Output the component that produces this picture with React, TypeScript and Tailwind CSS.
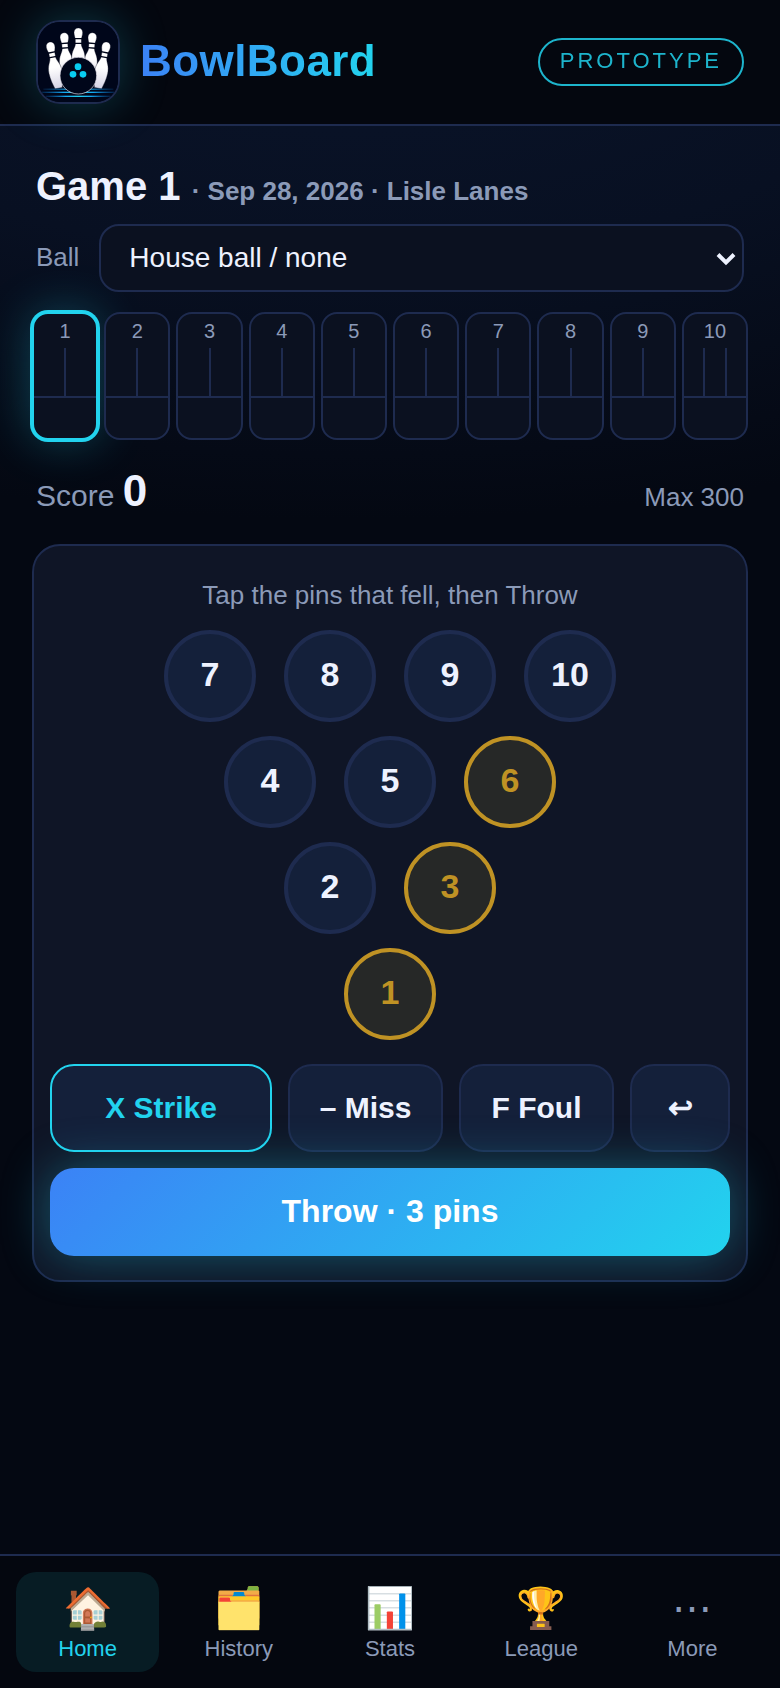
import { useState } from "react";

type Tab = { icon: string; label: string };

const TABS: Tab[] = [
  { icon: "🏠", label: "Home" },
  { icon: "🗂️", label: "History" },
  { icon: "📊", label: "Stats" },
  { icon: "🏆", label: "League" },
  { icon: "⋯", label: "More" },
];

const PIN_ROWS = [[7, 8, 9, 10], [4, 5, 6], [2, 3], [1]];

const FRAMES = [1, 2, 3, 4, 5, 6, 7, 8, 9, 10];

const PIN_TRANSFORMS = [
  "translate(78 32) rotate(-4)",
  "translate(164 32) rotate(4)",
  "translate(121 18)",
  "translate(35 60) rotate(-11)",
  "translate(207 60) rotate(11)",
];

function Logo() {
  return (
    <svg viewBox="0 0 240 240" className="block size-full" aria-hidden="true">
      <defs>
        <linearGradient id="pinBody" x1="0" y1="0" x2="0" y2="1">
          <stop offset="0.55" stopColor="#ffffff" />
          <stop offset="1" stopColor="#d5d3e4" />
        </linearGradient>
        <linearGradient id="laneLine" x1="0" y1="0" x2="1" y2="0">
          <stop offset="0" stopColor="#0a6fc4" stopOpacity="0.2" />
          <stop offset="0.3" stopColor="#12a5ee" />
          <stop offset="0.5" stopColor="#22d3ee" />
          <stop offset="0.7" stopColor="#12a5ee" />
          <stop offset="1" stopColor="#0a6fc4" stopOpacity="0.2" />
        </linearGradient>
      </defs>
      <rect width="240" height="240" fill="#00061a" />
      {PIN_TRANSFORMS.map((transform) => (
        <g key={transform} transform={transform}>
          <path
            d="M0 0C8 0 13 6 13 14C13 22 10 26 9 34L9 50C11 62 20 68 20 92C20 112 14 128 11 141L-11 141C-14 128 -20 112 -20 92C-20 68 -11 62 -9 50L-9 34C-10 26 -13 22 -13 14C-13 6 -8 0 0 0Z"
            fill="url(#pinBody)"
            stroke="#00061a"
            strokeWidth="1"
          />
          <path d="M-12 32H12M-12 46H12" stroke="#00061a" strokeWidth="4" />
        </g>
      ))}
      <rect x="16" y="200" width="210" height="3" fill="url(#laneLine)" />
      <rect x="8" y="209" width="226" height="4" fill="url(#laneLine)" />
      <rect x="24" y="221" width="194" height="4" fill="url(#laneLine)" />
      <circle cx="121" cy="161" r="55" fill="#00061a" stroke="#e8e6f0" strokeWidth="2" />
      <g fill="#08cdf2">
        <circle cx="120" cy="134" r="10" />
        <circle cx="105" cy="157" r="10" />
        <circle cx="135" cy="157" r="10" />
      </g>
    </svg>
  );
}

function Header() {
  return (
    <header className="relative z-10 flex items-center justify-between border-b-2 border-[#1e2b4f] bg-[#04070f] px-9 py-5">
      <div className="flex items-center gap-5">
        <div className="size-[84px] overflow-hidden rounded-3xl border-2 border-[#1e2b4f] shadow-[0_0_48px_rgba(34,211,238,0.25)]">
          <Logo />
        </div>
        <h1 className="bg-linear-to-r from-[#3b82f6] to-[#22d3ee] bg-clip-text pb-0.5 text-[44px] leading-[52px] font-bold tracking-[0.01em] text-transparent">
          BowlBoard
        </h1>
      </div>
      <span className="rounded-full border-2 border-[#22d3ee] px-5 pb-0.5 text-[22px] leading-[42px] tracking-[3px] text-[#22d3ee] uppercase opacity-85">
        Prototype
      </span>
    </header>
  );
}

function Frame({ number, active }: { number: number; active: boolean }) {
  const cells = number === 10 ? [0, 1, 2] : [0, 1];
  return (
    <li
      className={
        active
          ? "flex-1 rounded-2xl border-2 border-[#22d3ee] bg-[#0b1120] shadow-[0_0_0_2px_#22d3ee,0_0_48px_rgba(34,211,238,0.3)]"
          : "flex-1 rounded-2xl border-2 border-[#1e2b4f] bg-[#0b1120]"
      }
    >
      <div className="h-[34px] text-center text-xl leading-[34px] text-[#8b9ab8]">{number}</div>
      <div className="flex h-12">
        {cells.map((cell) => (
          <div key={cell} className="flex-1 border-r-2 border-[#1e2b4f] last:border-r-0" />
        ))}
      </div>
      <div className="h-[42px] border-t-2 border-[#1e2b4f]" />
    </li>
  );
}

export default function App() {
  const [fallen, setFallen] = useState<number[]>([1, 3, 6]);
  const [tab, setTab] = useState("Home");

  const toggle = (pin: number) =>
    setFallen((pins) => (pins.includes(pin) ? pins.filter((p) => p !== pin) : [...pins, pin]));

  return (
    <div className="flex min-h-screen flex-col bg-[#040812] bg-[radial-gradient(150%_520px_at_45%_0,#0a142a_0%,#081022_50%,#040812_100%)] bg-no-repeat font-['Liberation_Sans',Arial,sans-serif] text-[#eef2ff]">
      <Header />

      <main className="flex-1 px-8 pt-9">
        <h2 className="px-1 text-[40px] leading-[48px] font-bold">
          Game 1{" "}
          <span className="text-[26px] leading-none text-[#8b9ab8]">
            · Sep 28, 2026 · Lisle Lanes
          </span>
        </h2>

        <div className="mt-3.5 flex items-center gap-5 px-1">
          <label htmlFor="ball" className="pb-0.5 text-[26px] leading-9 text-[#8b9ab8]">
            Ball
          </label>
          <div className="relative flex-1">
            <select
              id="ball"
              className="block h-[68px] w-full appearance-none rounded-[20px] border-2 border-[#1e2b4f] bg-[#0b1120] px-7 text-[28px] text-[#eef2ff]"
            >
              <option>House ball / none</option>
            </select>
            <svg
              viewBox="0 0 20 14"
              className="pointer-events-none absolute top-7 right-2 h-3.5 w-5"
              fill="none"
              stroke="#eef2ff"
              strokeWidth="4"
              aria-hidden="true"
            >
              <path d="M2 2.5L10 10.5L18 2.5" />
            </svg>
          </div>
        </div>

        <ol className="mt-5 flex gap-1.5">
          {FRAMES.map((n) => (
            <Frame key={n} number={n} active={n === 1} />
          ))}
        </ol>

        <div className="mt-6 flex items-baseline justify-between px-1 text-[#8b9ab8]">
          <p className="text-3xl leading-none">
            Score <strong className="text-[44px] leading-[54px] text-[#eef2ff]">0</strong>
          </p>
          <p className="text-[26px] leading-8">Max 300</p>
        </div>

        <section className="mt-[26px] rounded-[28px] border-2 border-[#1e2b4f] bg-[#0f1526] px-4 py-6">
          <p className="mt-1 mb-3.5 text-center text-[26px] leading-[42px] text-[#8b9ab8]">
            Tap the pins that fell, then Throw
          </p>
          <div className="flex flex-col gap-3.5">
            {PIN_ROWS.map((row) => (
              <div key={row[0]} className="flex justify-center gap-7">
                {row.map((pin) => (
                  <button
                    key={pin}
                    type="button"
                    aria-pressed={fallen.includes(pin)}
                    onClick={() => toggle(pin)}
                    className={
                      fallen.includes(pin)
                        ? "size-[92px] rounded-full border-4 border-[#bf9224] bg-[#262827] pb-1 text-[34px] leading-10 font-bold text-[#bf9224]"
                        : "size-[92px] rounded-full border-4 border-[#1e2b4f] bg-[#14203a] pb-1 text-[34px] leading-10 font-bold text-[#eef2ff]"
                    }
                  >
                    {pin}
                  </button>
                ))}
              </div>
            ))}
          </div>

          <div className="mt-6 grid grid-cols-[222fr_155fr_155fr_100fr] gap-4 text-3xl font-bold">
            <button
              type="button"
              className="h-[88px] rounded-3xl border-2 border-[#22d3ee] bg-[#14203a] text-[#22d3ee]"
            >
              X Strike
            </button>
            <button type="button" className="rounded-3xl border-2 border-[#1e2b4f] bg-[#14203a]">
              – Miss
            </button>
            <button type="button" className="rounded-3xl border-2 border-[#1e2b4f] bg-[#14203a]">
              F Foul
            </button>
            <button
              type="button"
              aria-label="Undo"
              className="rounded-3xl border-2 border-[#1e2b4f] bg-[#14203a]"
            >
              ↩
            </button>
          </div>

          <button
            type="button"
            className="relative mt-4 h-[88px] w-full rounded-3xl bg-linear-[135deg] from-[#3b82f6] to-[#22d3ee] pb-0.5 text-[32px] font-bold text-white shadow-[0_0_48px_rgba(34,211,238,0.35)]"
          >
            Throw · {fallen.length} pins
          </button>
        </section>
      </main>

      <nav className="sticky bottom-0 flex gap-2 border-t-2 border-[#1e2b4f] bg-[#04070f] p-4">
        {TABS.map(({ icon, label }) => (
          <button
            key={label}
            type="button"
            onClick={() => setTab(label)}
            className={
              tab === label
                ? "flex h-[100px] flex-1 flex-col items-center rounded-[20px] bg-[#071c24] pt-3 text-[22px] text-[#22d3ee]"
                : "flex h-[100px] flex-1 flex-col items-center rounded-[20px] pt-3 text-[22px] text-[#8b9ab8]"
            }
          >
            <span className="text-[40px] leading-[48px]">{icon}</span>
            <span className="leading-[34px]">{label}</span>
          </button>
        ))}
      </nav>
    </div>
  );
}
